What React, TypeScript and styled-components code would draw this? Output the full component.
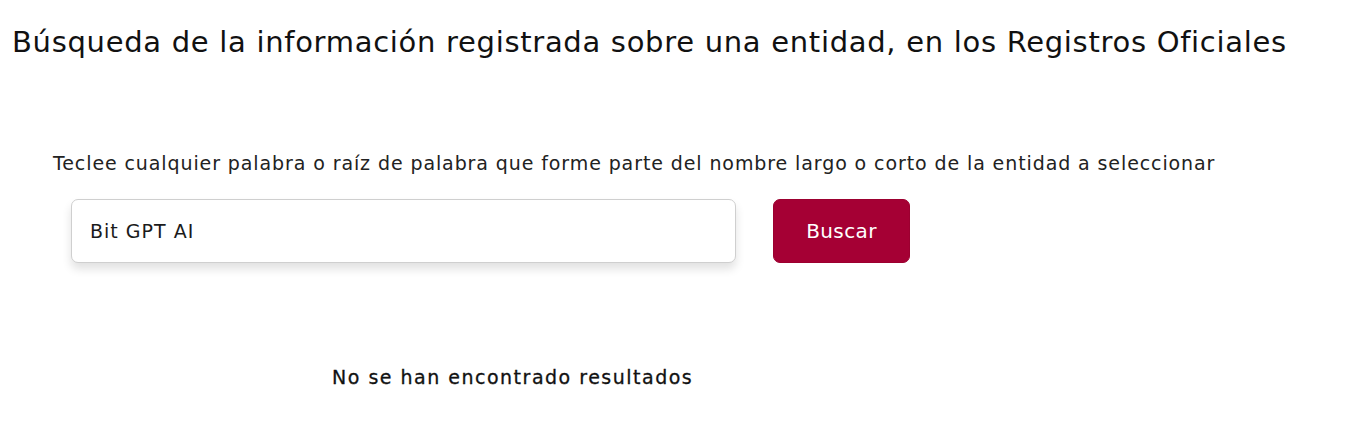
import React, { useState } from 'react'
import styled, { createGlobalStyle } from 'styled-components'

const GlobalStyle = createGlobalStyle`
  html, body {
    margin: 0;
    padding: 0;
    background: #ffffff;
  }
  body {
    font-family: "DejaVu Sans", "Noto Sans", sans-serif;
    color: #1b1b1b;
  }
`

const App = () => {
  const [query, setQuery] = useState('Bit GPT AI')

  return (
    <Page>
      <GlobalStyle />
      <Title>Búsqueda de la información registrada sobre una entidad, en los Registros Oficiales</Title>

      <SearchSection>
        <Hint>
          Teclee cualquier palabra o raíz de palabra que forme parte del nombre largo o corto de la entidad a
          seleccionar
        </Hint>
        <SearchRow>
          <SearchInput value={query} onChange={(e) => setQuery(e.target.value)} />
          <SearchButton type="button">Buscar</SearchButton>
        </SearchRow>
      </SearchSection>

      <EmptyResult>No se han encontrado resultados</EmptyResult>
    </Page>
  )
}

const Page = styled.div`
  width: 1372px;
  height: 435px;
  box-sizing: border-box;
  padding: 22px 0 0 12px;
  display: flex;
  flex-direction: column;
`

const Title = styled.h1`
  margin: 0;
  font-size: 29px;
  font-weight: 400;
  line-height: 40px;
  color: #111;
  letter-spacing: 0.7px;
  white-space: nowrap;
`

const SearchSection = styled.section`
  margin-top: 89px;
  padding-left: 41px;
  display: flex;
  flex-direction: column;
`

const Hint = styled.p`
  margin: 0;
  font-size: 19px;
  line-height: 24px;
  color: #222;
  letter-spacing: 0.9px;
  white-space: nowrap;
`

const SearchRow = styled.div`
  margin-top: 24px;
  padding-left: 18px;
  display: flex;
  align-items: center;
  gap: 37px;
`

const SearchInput = styled.input`
  width: 665px;
  height: 64px;
  box-sizing: border-box;
  padding: 0 18px;
  border: 1px solid #cfcfcf;
  border-radius: 7px;
  box-shadow: 0 6px 10px rgba(0, 0, 0, 0.12);
  font-family: inherit;
  font-size: 19px;
  letter-spacing: 1px;
  color: #1b1b1b;
  outline: none;
`

const SearchButton = styled.button`
  width: 137px;
  height: 64px;
  border: 1px solid #9c0030;
  border-radius: 7px;
  background: #a50034;
  color: #ffffff;
  font-family: inherit;
  font-size: 20px;
  letter-spacing: 0.4px;
  cursor: pointer;
`

const EmptyResult = styled.p`
  margin: 102px 0 0 320px;
  font-size: 19px;
  line-height: 24px;
  color: #111;
  letter-spacing: 1.5px;
  -webkit-text-stroke: 0.3px #111;
`

export default App
